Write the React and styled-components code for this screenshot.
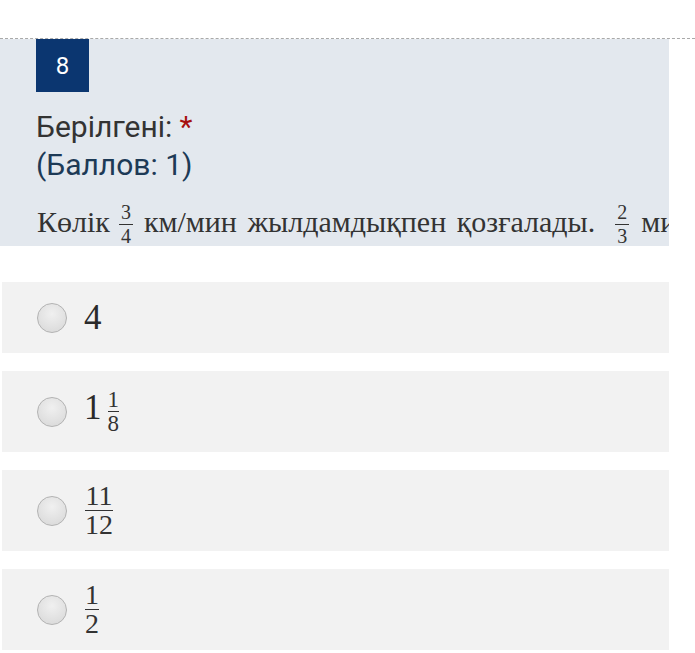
import React from 'react';
import styled, { createGlobalStyle } from 'styled-components';

const GlobalStyle = createGlobalStyle`
  html, body {
    margin: 0;
    padding: 0;
    background: #ffffff;
  }
  body {
    font-family: Roboto, "Liberation Sans", sans-serif;
    width: 695px;
    height: 653px;
    overflow: hidden;
  }
`;

const Page = styled.div`
  padding-top: 38px;
`;

const DashedRule = styled.div`
  width: 695px;
  border-top: 1px dashed #a9a9a9;
`;

const QuestionPanel = styled.section`
  width: 669px;
  box-sizing: border-box;
  padding: 0 0 0 36px;
  background: #e3e8ee;
  overflow: hidden;
`;

const NumberBox = styled.div`
  width: 53px;
  height: 53px;
  display: flex;
  align-items: center;
  justify-content: center;
  background: #0b3670;
  color: #ffffff;
  font-family: Roboto, sans-serif;
  font-size: 24px;
`;

const Heading = styled.h3`
  margin: 16px 0 0;
  font-family: Roboto, sans-serif;
  font-weight: 400;
  font-size: 30px;
  line-height: 38px;
  color: #333333;
`;

const Required = styled.span`
  color: #a60f0f;
  margin-left: 7px;
`;

const Points = styled.span`
  display: block;
  color: #1d3a56;
`;

const QuestionText = styled.p`
  margin: 18px 0 0 1px;
  font-family: "Liberation Serif", "Times New Roman", serif;
  font-size: 30px;
  line-height: 28px;
  word-spacing: 3px;
  color: #333333;
  white-space: nowrap;
`;

const FractionBox = styled.span`
  display: inline-flex;
  flex-direction: column;
  align-items: center;
  vertical-align: ${p => p.$lift || 0}px;
  margin: 0 ${p => p.$right ?? p.$space ?? 2}px 0 ${p => p.$space ?? 2}px;
  font-family: "Liberation Serif", "Times New Roman", serif;
  font-size: ${p => p.$size}px;
  line-height: 1;
  word-spacing: 0;
  color: #333333;
`;

const Numerator = styled.span`
  display: block;
  padding: 0 2px ${p => p.$gap}px;
`;

const Denominator = styled.span`
  display: block;
  align-self: stretch;
  text-align: center;
  border-top: 1px solid #333333;
  padding-top: ${p => p.$gap}px;
`;

const Fraction = ({ top, bottom, size, lift, above = 0, below = 0, space, right }) => (
  <FractionBox $size={size} $lift={lift} $space={space} $right={right}>
    <Numerator $gap={above}>{top}</Numerator>
    <Denominator $gap={below}>{bottom}</Denominator>
  </FractionBox>
);

const AnswerList = styled.div`
  display: flex;
  flex-direction: column;
  gap: 18px;
  margin: 36px 0 0 2px;
`;

const AnswerRow = styled.label`
  display: flex;
  align-items: center;
  gap: 17px;
  width: 667px;
  min-height: ${p => p.$height}px;
  box-sizing: border-box;
  padding: 0 0 0 35px;
  background: #f2f2f2;
`;

const Radio = styled.span`
  flex: none;
  width: 30px;
  height: 30px;
  box-sizing: border-box;
  border-radius: 50%;
  border: 1px solid #b3b3b3;
  background: radial-gradient(circle at 50% 35%, #f0f0f0 0%, #e2e2e2 55%, #d6d6d6 100%);
`;

const AnswerValue = styled.span`
  display: flex;
  align-items: center;
  font-family: "Liberation Serif", "Times New Roman", serif;
  font-size: 35px;
  line-height: 1;
  color: #2a2a2a;
`;

const Mixed = styled.span`
  display: inline-block;
  line-height: 1;
`;

const answers = [
  { id: 'a', height: 71, value: '4' },
  {
    id: 'b',
    height: 81,
    value: (
      <Mixed>
        1<Fraction top="1" bottom="8" size={23} lift={12} above={-1} space={6} right={0} />
      </Mixed>
    ),
  },
  { id: 'c', height: 81, value: <Fraction top="11" bottom="12" size={28} above={-2} space={1} /> },
  { id: 'd', height: 81, value: <Fraction top="1" bottom="2" size={28} above={-2} space={1} /> },
];

export default function App() {
  return (
    <Page>
      <GlobalStyle />
      <DashedRule />
      <QuestionPanel>
        <NumberBox>8</NumberBox>
        <Heading>
          Берілгені:<Required>*</Required>
          <Points>(Баллов: 1)</Points>
        </Heading>
        <QuestionText>
          Көлік<Fraction top="3" bottom="4" size={20} lift={13} above={2} below={1} space={9} right={11} />км/мин
          жылдамдықпен қозғалады.<Fraction top="2" bottom="3" size={20} lift={13} above={2} below={1} space={20} right={12} />минутта
          неше километр жүреді?
        </QuestionText>
      </QuestionPanel>
      <AnswerList>
        {answers.map(a => (
          <AnswerRow key={a.id} $height={a.height}>
            <Radio />
            <AnswerValue>{a.value}</AnswerValue>
          </AnswerRow>
        ))}
      </AnswerList>
    </Page>
  );
}
